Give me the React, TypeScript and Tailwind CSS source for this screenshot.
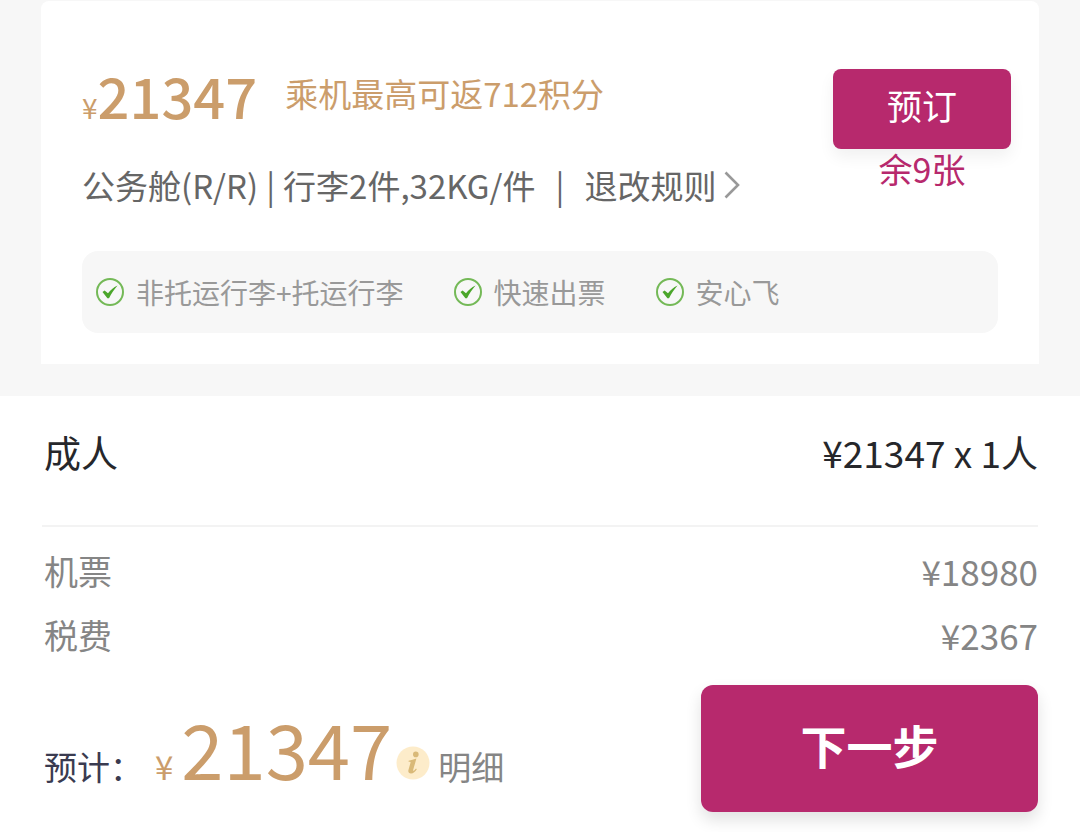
import type { ReactNode } from "react";

const benefits = ["非托运行李+托运行李", "快速出票", "安心飞"];

const fees = [
  { label: "机票", amount: "¥18980" },
  { label: "税费", amount: "¥2367" },
];

function CheckIcon() {
  return (
    <svg viewBox="0 0 28 28" className="size-7 shrink-0" aria-hidden="true">
      <circle cx="14" cy="14" r="13" fill="none" stroke="#74b957" strokeWidth="2" />
      <path d="M6.500 14 8.600 12.400 12 15.200C14.400 12 17.400 9.200 21.600 7.400 18.200 11.200 15.400 15.200 13 20.200h-1.600Z" fill="#4ba62b" />
    </svg>
  );
}

function ChevronIcon() {
  return (
    <svg viewBox="0 0 16 28" className="h-7 w-4" fill="none" stroke="#999" strokeWidth="2.6" aria-hidden="true">
      <path d="M1.500 1.500 14 14 1.500 26.500" />
    </svg>
  );
}

function InfoIcon() {
  return (
    <svg viewBox="0 0 34 34" className="size-[34px]" aria-hidden="true">
      <circle cx="17" cy="17" r="16.500" fill="#fdecca" />
      <circle cx="19.800" cy="8.400" r="2.800" fill="#d9b978" />
      <path d="M12.600 14.800c2.600-.6 5-1.200 7.800-2.200l-3.200 11.200c-.3 1.200.4 1.300 1.200.5l1.600-1.700.8.600c-1.600 2.600-3.500 4.200-5.800 4.200-2.400 0-3.100-1.500-2.500-3.700l2-7c.2-.8-.3-1-1.900-.9z" fill="#d9b978" />
    </svg>
  );
}

function Benefit({ children }: { children: ReactNode }) {
  return (
    <li className="flex items-center gap-3 text-[28px] leading-10 text-[#999]">
      <CheckIcon />
      {children}
    </li>
  );
}

function FareCard() {
  return (
    <section className="rounded-t-lg bg-white pb-[31px]">
      <div className="flex justify-between pt-[68px] pr-7 pl-[41px]">
        <div>
          <div className="flex gap-7 text-[#cb9d6b]">
            <p className="flex items-baseline text-[56px] leading-13 font-medium">
              <span className="text-[28px] leading-none font-normal">¥</span>
              21347
            </p>
            <p className="text-[33px] leading-12">乘机最高可返712积分</p>
          </div>
          <div className="mt-10 flex items-center text-[33px] leading-12 text-[#666]">
            <span>公务舱(R/R)</span>
            <span className="mx-2">|</span>
            <span>行李2件,32KG/件</span>
            <span className="mx-5">|</span>
            <button type="button" className="flex cursor-pointer items-center gap-2">
              退改规则
              <ChevronIcon />
            </button>
          </div>
        </div>
        <div className="flex flex-col items-center">
          <button
            type="button"
            className="w-[178px] cursor-pointer rounded-lg bg-[#b7296d] pb-2 text-[35px] leading-18 text-white shadow-[0_8px_16px_rgba(0,0,0,0.06)]"
          >
            预订
          </button>
          <p className="text-[34px] leading-10 text-[#b7296d]">余9张</p>
        </div>
      </div>
      <ul className="mt-[42px] mr-[41px] ml-[41px] flex gap-[50px] rounded-2xl bg-[#f7f7f7] px-[14px] py-[21px]">
        {benefits.map((benefit) => (
          <Benefit key={benefit}>{benefit}</Benefit>
        ))}
      </ul>
    </section>
  );
}

function Summary() {
  return (
    <section className="px-[42px]">
      <div className="flex justify-between border-b-2 border-[#f3f3f3] pt-9 pb-[53px] pl-0.5 text-[37px] leading-10 text-[#26272b]">
        <h2>成人</h2>
        <p>¥21347 x 1人</p>
      </div>
      <dl className="pt-3 pl-0.5">
        {fees.map(({ label, amount }) => (
          <div key={label} className="flex justify-between text-[34px] leading-16 text-[#858585]">
            <dt>{label}</dt>
            <dd className="text-[35px]">{amount}</dd>
          </div>
        ))}
      </dl>
    </section>
  );
}

function Footer() {
  return (
    <footer className="flex items-start justify-between pt-[18px] pr-[42px] pb-5 pl-11">
      <div className="flex items-baseline pt-[22px] text-[33px] leading-20">
        <span className="text-[#3a3b50]">预计：</span>
        <span className="ml-3 text-[#cb9d6b]">¥</span>
        <strong className="ml-2 text-[76px] font-normal text-[#cb9d6b]">21347</strong>
        <button type="button" className="ml-1 flex cursor-pointer items-baseline gap-2 text-[#858585]">
          <InfoIcon />
          明细
        </button>
      </div>
      <button
        type="button"
        className="w-[337px] cursor-pointer rounded-xl bg-[#b7296d] pb-2 text-[46px] leading-[119px] font-bold text-white shadow-[0_8px_16px_rgba(0,0,0,0.12)]"
      >
        下一步
      </button>
    </footer>
  );
}

export default function App() {
  return (
    <main className="bg-white font-['Noto_Sans_CJK_SC',sans-serif] whitespace-nowrap">
      <div className="bg-[#f7f7f7] px-[41px] pt-px pb-8">
        <FareCard />
      </div>
      <Summary />
      <Footer />
    </main>
  );
}
